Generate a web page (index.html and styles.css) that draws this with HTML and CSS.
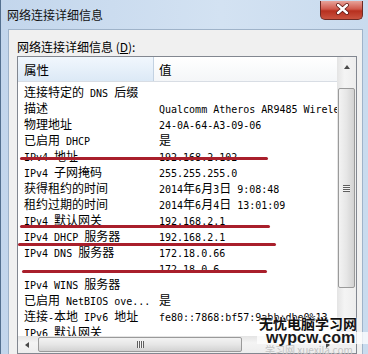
FILE: index.html
```html
<!DOCTYPE html>
<html lang="zh-CN">
<head>
    <meta charset="UTF-8">
    <title>网络连接详细信息</title>
    <link rel="stylesheet" href="styles.css">
</head>
<body>
    <div class="window">
        <div class="titlebar">
            <span class="title">网络连接详细信息</span>
            <div class="close">
                <svg width="43" height="19" viewBox="0 0 43 19">
                    <path d="M17 5 L26 13 M26 5 L17 13" stroke="#5a1410" stroke-width="4" stroke-linecap="round"/>
                    <path d="M17 5 L26 13 M26 5 L17 13" stroke="#fff" stroke-width="2.4" stroke-linecap="round"/>
                </svg>
            </div>
        </div>
        <div class="client">
            <div class="label">网络连接详细信息 (<u>D</u>):</div>
            <div class="listbox">
                <div class="view">
                    <div class="header">
                        <div class="hcell sorted">属性</div>
                        <div class="hcell">值</div>
                    </div>
                    <div class="rows">
                        <div class="row"><div class="cell">连接特定的<span class="m"> DNS </span>后缀</div><div class="cell"></div></div>
                        <div class="row"><div class="cell">描述</div><div class="cell"><span class="m">Qualcomm Atheros AR9485 Wireless Network Adapter</span></div></div>
                        <div class="row"><div class="cell">物理地址</div><div class="cell"><span class="m">24-0A-64-A3-09-06</span></div></div>
                        <div class="row"><div class="cell">已启用<span class="m"> DHCP</span></div><div class="cell">是</div></div>
                        <div class="row"><div class="cell"><span class="m">IPv4 </span>地址</div><div class="cell"><span class="m">192.168.2.102</span></div></div>
                        <div class="row"><div class="cell"><span class="m">IPv4 </span>子网掩码</div><div class="cell"><span class="m">255.255.255.0</span></div></div>
                        <div class="row"><div class="cell">获得租约的时间</div><div class="cell"><span class="m">2014</span>年<span class="m">6</span>月<span class="m">3</span>日<span class="m"> 9:08:48</span></div></div>
                        <div class="row"><div class="cell">租约过期的时间</div><div class="cell"><span class="m">2014</span>年<span class="m">6</span>月<span class="m">4</span>日<span class="m"> 13:01:09</span></div></div>
                        <div class="row"><div class="cell"><span class="m">IPv4 </span>默认网关</div><div class="cell"><span class="m">192.168.2.1</span></div></div>
                        <div class="row"><div class="cell"><span class="m">IPv4 DHCP </span>服务器</div><div class="cell"><span class="m">192.168.2.1</span></div></div>
                        <div class="row"><div class="cell"><span class="m">IPv4 DNS </span>服务器</div><div class="cell"><span class="m">172.18.0.66</span></div></div>
                        <div class="row"><div class="cell"></div><div class="cell"><span class="m">172.18.0.6</span></div></div>
                        <div class="row"><div class="cell"><span class="m">IPv4 WINS </span>服务器</div><div class="cell"></div></div>
                        <div class="row"><div class="cell">已启用<span class="m"> NetBIOS ove...</span></div><div class="cell">是</div></div>
                        <div class="row"><div class="cell">连接<span class="m">-</span>本地<span class="m"> IPv6 </span>地址</div><div class="cell"><span class="m">fe80::7868:bf57:9abb:dbe0%13</span></div></div>
                        <div class="row"><div class="cell"><span class="m">IPv6 </span>默认网关</div><div class="cell"></div></div>
                    </div>
                </div>
                <div class="vscroll">
                    <div class="sbtn"><span class="arrow-up"></span></div>
                    <div class="vtrack">
                        <div class="vthumb"><span class="vgrip"></span></div>
                    </div>
                    <div class="sbtn"><span class="arrow-down"></span></div>
                </div>
                <div class="hscroll">
                    <div class="hbtn"><span class="arrow-left"></span></div>
                    <div class="htrack">
                        <div class="hthumb"><span class="hgrip"></span></div>
                    </div>
                    <div class="hbtn"><span class="arrow-right"></span></div>
                </div>
                <div class="corner"></div>

                <!-- hand drawn red underlines -->
                <div class="mark mark-1"></div>
                <div class="mark mark-2"></div>
                <div class="mark mark-3"></div>
                <div class="mark mark-4"></div>
            </div>
        </div>

        <div class="watermark">
            <div class="wm-cn">无忧电脑学习网</div>
            <div class="wm-en">wypcw.com</div>
            <div class="wm-faint">学习网 xuexila.com</div>
        </div>
    </div>
</body>
</html>
```

FILE: styles.css
```css
body {
    margin: 0;
    width: 368px;
    height: 354px;
    overflow: hidden;
    font-family: "Noto Sans CJK SC", sans-serif;
    font-size: 12px;
    color: #000;
}
.window {
    position: relative;
    height: 354px;
    background: linear-gradient(to right, #c3d6ec, #d3e2f2 60%, #c9dbee);
    border-left: 1px solid #54708f;
    display: flex;
    flex-direction: column;
}
.titlebar {
    height: 29px;
    display: flex;
    align-items: center;
    padding-left: 6px;
}
.title {
    font-size: 12px;
    line-height: 16px;
    color: #111;
}
.close {
    margin-left: auto;
    margin-right: 5px;
    align-self: flex-start;
    margin-top: 1px;
    width: 43px;
    height: 19px;
    box-sizing: border-box;
    border: 1px solid #6d2a24;
    border-top: none;
    border-radius: 0 0 5px 5px;
    background: linear-gradient(#e7a39a, #d0584b 45%, #b7301f 55%, #c9523f);
}
.close svg {
    display: block;
    margin-top: -1px;
}
.client {
    flex: 1;
    margin-left: 7px;
    margin-right: 5px;
    border: 1px solid #9fb3c9;
    border-bottom: none;
    background: #f0f0f0;
    padding: 9px 0 0 8px;
}
.label {
    line-height: 16px;
    font-size: 12px;
    margin-bottom: 1px;
}
.label u {
    text-decoration-thickness: 1px;
}
.listbox {
    position: relative;
    width: 338px;
    height: 296px;
    border: 1px solid #828790;
    background: #fff;
    display: grid;
    grid-template-columns: 319px 19px;
    grid-template-rows: 279px 17px;
}
.view {
    overflow: hidden;
}
.header {
    display: grid;
    grid-template-columns: 136px 1fr;
    height: 24px;
    border-bottom: 1px solid #d8dde4;
    background: linear-gradient(#ffffff, #f4f6f8);
}
.hcell {
    padding: 3px 0 0 5px;
    line-height: 19px;
    font-size: 12.5px;
}
.hcell.sorted {
    padding-left: 6px;
    background: linear-gradient(#f1f7fd, #dce9f6);
    border-right: 1px solid #c3d2e2;
}
.rows {
    padding-top: 2px;
}
.row {
    display: grid;
    grid-template-columns: 136px 1fr;
    height: 16px;
}
.cell {
    white-space: nowrap;
    overflow: hidden;
    line-height: 16px;
    height: 16px;
    padding-left: 5px;
}
.cell:first-child {
    padding-left: 6px;
}
.m {
    font-family: "DejaVu Sans Mono", monospace;
    font-size: 10px;
    white-space: pre;
}

/* scrollbars */
.vscroll {
    grid-row: 1;
    grid-column: 2;
    display: flex;
    flex-direction: column;
    background: linear-gradient(to right, #e4e4e4, #f4f4f4 40%, #ededed);
}
.sbtn {
    height: 20px;
    display: flex;
    align-items: center;
    justify-content: center;
}
.arrow-up {
    width: 0;
    height: 0;
    border-left: 3.5px solid transparent;
    border-right: 3.5px solid transparent;
    border-bottom: 4px solid #4a4a4a;
    margin-top: -1px;
}
.arrow-down {
    width: 0;
    height: 0;
    border-left: 3.5px solid transparent;
    border-right: 3.5px solid transparent;
    border-top: 4px solid #4a4a4a;
}
.vtrack {
    flex: 1;
    padding: 11px 1px 0 1px;
}
.vthumb {
    height: 200px;
    box-sizing: border-box;
    border: 1px solid #9a9a9a;
    border-radius: 2px;
    background: linear-gradient(to right, #f3f3f3, #e6e6e6 50%, #d2d2d2);
    display: flex;
    align-items: center;
    justify-content: center;
}
.vgrip {
    width: 7px;
    height: 7px;
    background: repeating-linear-gradient(#5f5f5f 0 1px, #f4f4f4 1px 2px);
}
.hscroll {
    grid-row: 2;
    grid-column: 1;
    display: flex;
    background: linear-gradient(#e4e4e4, #f4f4f4 40%, #ededed);
}
.hbtn {
    width: 18px;
    display: flex;
    align-items: center;
    justify-content: center;
}
.arrow-left {
    width: 0;
    height: 0;
    border-top: 3.5px solid transparent;
    border-bottom: 3.5px solid transparent;
    border-right: 4px solid #4a4a4a;
}
.arrow-right {
    width: 0;
    height: 0;
    border-top: 3.5px solid transparent;
    border-bottom: 3.5px solid transparent;
    border-left: 4px solid #4a4a4a;
}
.htrack {
    flex: 1;
    padding: 1px 0 1px 2px;
}
.hthumb {
    width: 204px;
    height: 100%;
    box-sizing: border-box;
    border: 1px solid #9a9a9a;
    border-radius: 2px;
    background: linear-gradient(#f3f3f3, #e6e6e6 50%, #d2d2d2);
    display: flex;
    align-items: center;
    justify-content: center;
}
.hgrip {
    width: 7px;
    height: 7px;
    background: repeating-linear-gradient(to right, #5f5f5f 0 1px, #f4f4f4 1px 2px);
}
.corner {
    grid-row: 2;
    grid-column: 2;
    background: #f0f0f0;
}

/* red annotation lines */
.mark {
    position: absolute;
    height: 3px;
    border-radius: 2px;
    background: #a91f2b;
}
.mark-1 { left: 2px; top: 100px; width: 248px; }
.mark-2 { left: 2px; top: 168px; width: 250px; }
.mark-3 { left: 0; top: 186px; width: 258px; }
.mark-4 { left: 4px; top: 213px; width: 245px; }

.watermark {
    position: absolute;
    left: 256px;
    top: 314px;
    width: 112px;
    text-align: left;
}
.wm-cn {
    font-size: 14px;
    font-weight: bold;
    line-height: 18px;
    padding-left: 2px;
    color: #111;
    text-shadow: 0 0 2px #fff, 0 0 2px #fff;
}
.wm-en {
    font-family: "Liberation Sans", Arial, sans-serif;
    font-size: 16px;
    font-weight: bold;
    line-height: 12px;
    height: 12px;
    padding-left: 9px;
    color: #1a1a1a;
    background: rgba(255, 255, 255, 0.75);
}
.wm-faint {
    font-size: 10px;
    line-height: 12px;
    padding-left: 8px;
    color: #c4c4c4;
    white-space: nowrap;
}
```
